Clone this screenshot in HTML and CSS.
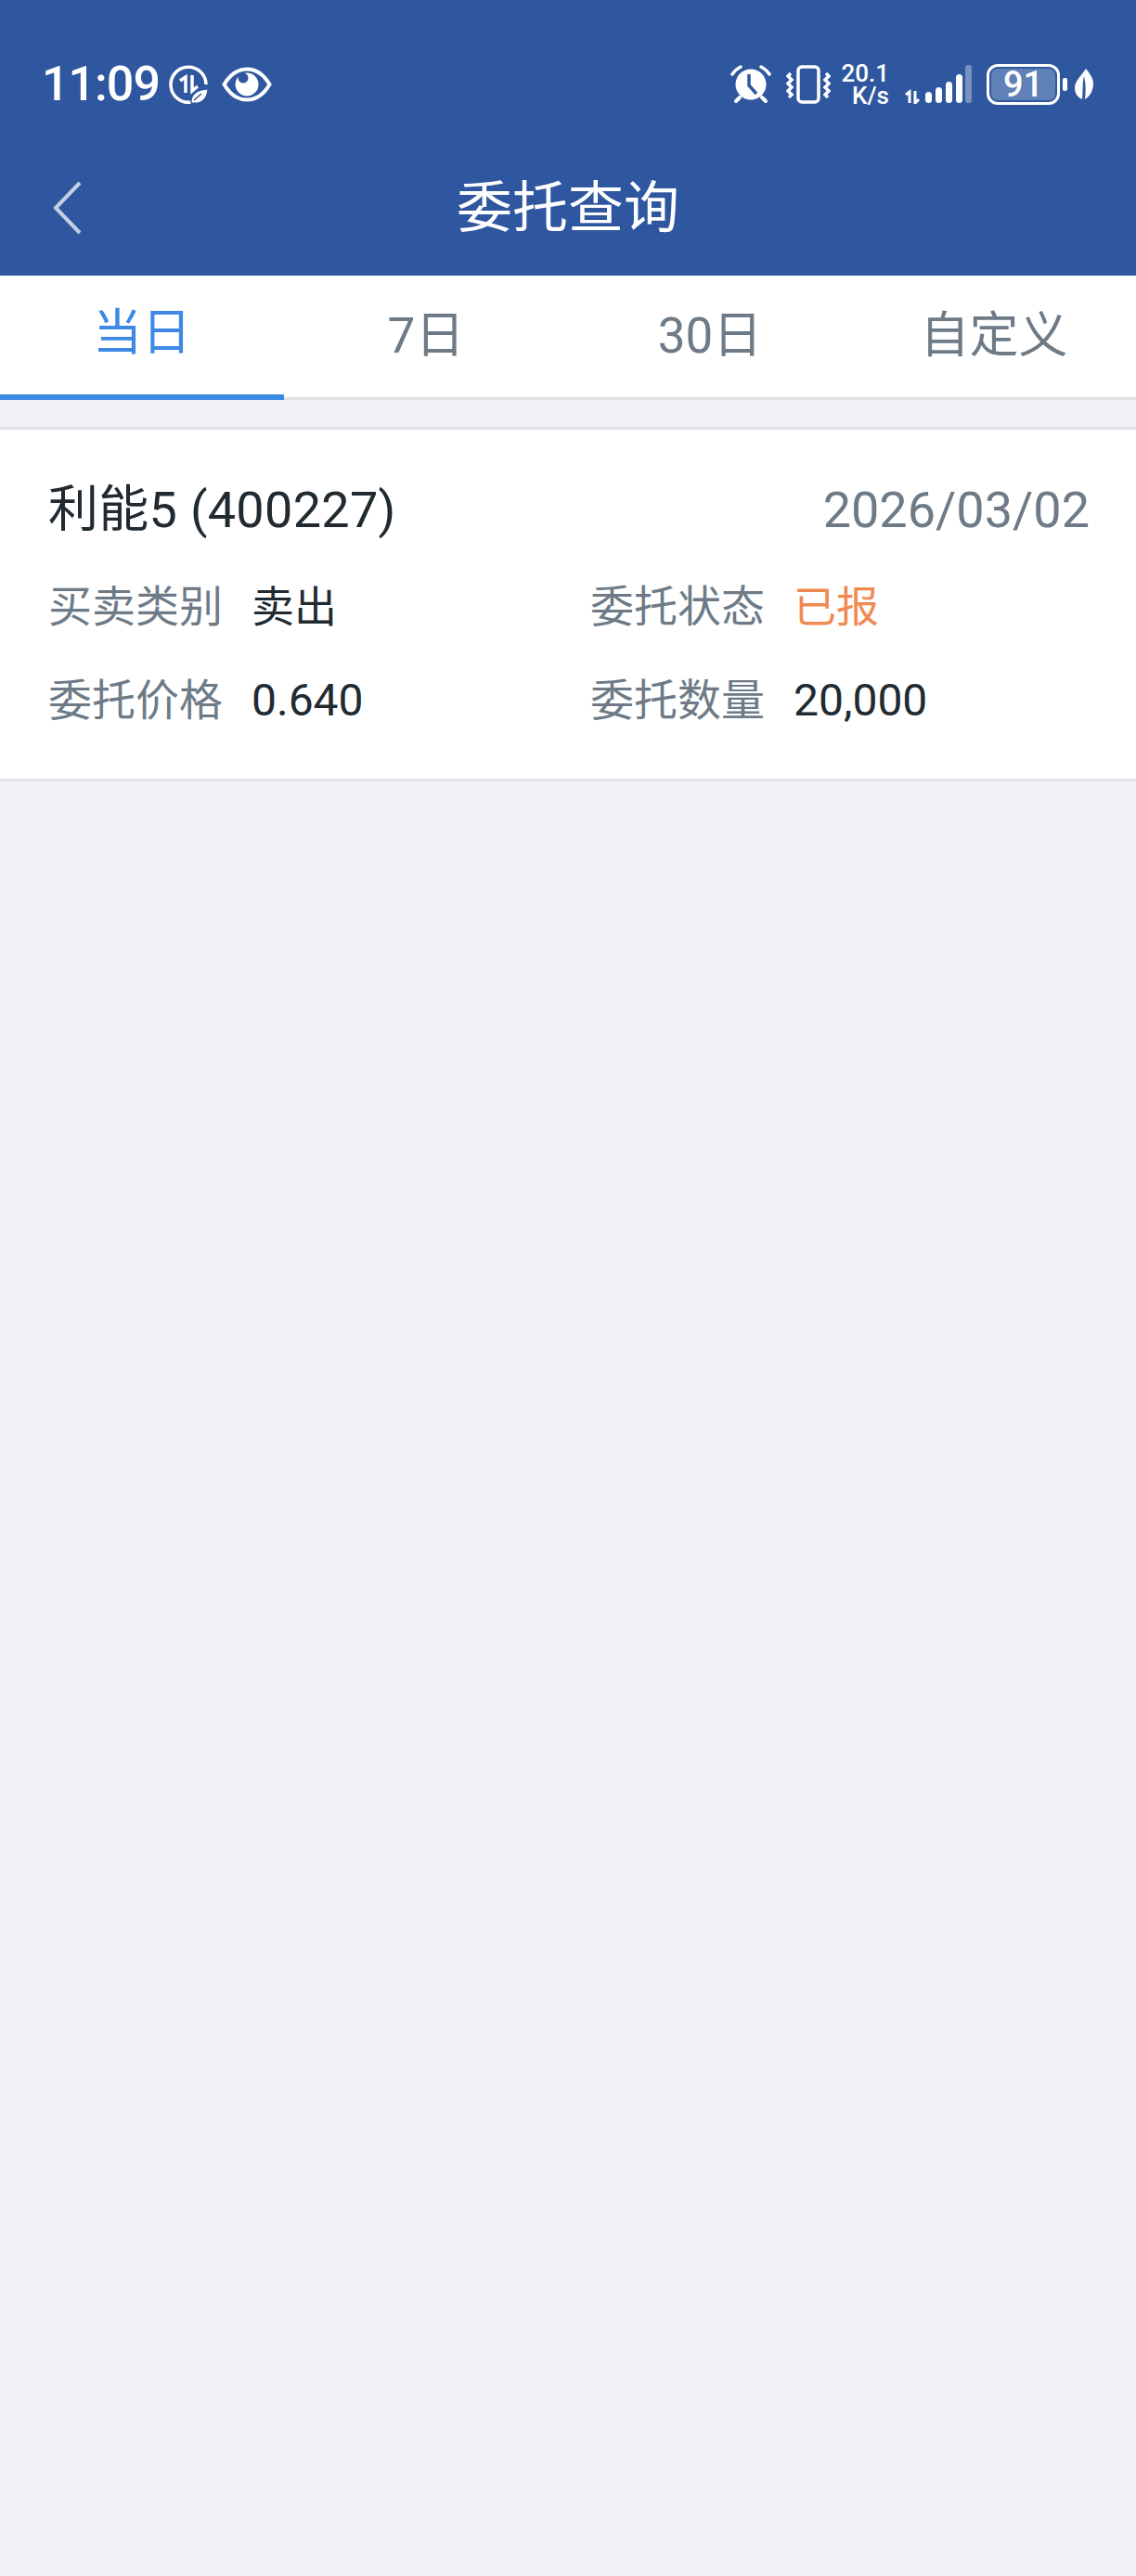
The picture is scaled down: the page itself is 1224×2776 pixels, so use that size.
FILE: index.html
```html
<!DOCTYPE html>
<html lang="zh-CN">
<head>
<meta charset="utf-8">
<title>委托查询</title>
<link rel="stylesheet" href="styles.css">
</head>
<body>
<header class="top">
  <div class="status">
    <div class="status-left">
      <span class="time">11:09</span>
      <svg class="ic-data" viewBox="0 0 42 42" width="42" height="42"><path d="M24 40A19 19 0 1 1 40 21" fill="none" stroke="#fff" stroke-width="3.500"/><path d="M12 17l6-4v17" fill="none" stroke="#fff" stroke-width="3.500"/><path d="M25 11v17l6-5" fill="none" stroke="#fff" stroke-width="3.500"/><path d="M24 41c-1-9 6-15 18-15 0 10-7 17-18 15z" fill="#fff" stroke="#2f579f" stroke-width="1.500"/><path d="M27 38l8-7" stroke="#2f579f" stroke-width="1.500"/></svg>
      <svg class="ic-eye" viewBox="0 0 54 38" width="54" height="38"><path d="M2.500 19C9 8 18 2.500 27 2.500S45 8 51.500 19C45 30 36 35.500 27 35.500S9 30 2.500 19z" fill="none" stroke="#fff" stroke-width="4"/><circle cx="27" cy="19" r="12.500" fill="#fff"/><circle cx="23" cy="12" r="5.500" fill="#2f579f"/></svg>
    </div>
    <div class="status-right">
      <svg class="ic-alarm" viewBox="0 0 44 42" width="44" height="42"><circle cx="22" cy="21" r="16.500" fill="#fff"/><path d="M20 10v12l8 9" fill="none" stroke="#2f579f" stroke-width="3.500"/><path d="M2 10c2-3 5-6 9-8M42 10c-2-3-5-6-9-8" fill="none" stroke="#fff" stroke-width="3.500" stroke-linecap="round"/><path d="M10 35l-4 4M34 35l4 4" stroke="#fff" stroke-width="4" stroke-linecap="round"/></svg>
      <svg class="ic-vib" viewBox="0 0 48 42" width="48" height="42"><rect x="13" y="2" width="22" height="38" rx="4" fill="none" stroke="#fff" stroke-width="3.500"/><path d="M5 9l-3 3 4 4-4 4 4 4-4 4 4 4-3 3M43 9l3 3-4 4 4 4-4 4 4 4-4 4 3 3" fill="none" stroke="#fff" stroke-width="3.500"/></svg>
      <div class="speed"><span>20.1</span><span>K/s</span></div>
      <svg class="ic-signal" viewBox="0 0 72 42" width="72" height="42"><path d="M1 32l4-3v12M11 28v13l4-4" fill="none" stroke="#fff" stroke-width="3"/><rect x="22" y="29" width="7" height="12" rx="3.500" fill="#fff"/><rect x="33" y="24" width="7" height="17" rx="3.500" fill="#fff"/><rect x="44" y="18" width="7" height="23" rx="3.500" fill="#fff"/><rect x="55" y="10" width="7" height="31" rx="3.500" fill="#fff"/><rect x="65" y="0" width="7" height="41" rx="3" fill="#fff" opacity=".35"/></svg>
      <div class="battery"><div class="battery-body"><div class="battery-fill"></div><span class="battery-num">91</span></div><div class="battery-tip"></div></div>
      <svg class="ic-leaf" viewBox="0 0 20 34" width="20" height="34"><path d="M12 0c5 6 8 11 8 16 0 8-4 14-9 17 1-9 1-17-1-25-2 8-1 16-2 25C3 31 0 26 0 21 0 13 7 8 12 0z" fill="#fff"/></svg>
    </div>
  </div>
  <div class="navbar">
    <svg class="back" viewBox="0 0 36 60" width="36" height="60"><path d="M31 3L5 30l26 27" fill="none" stroke="#c3cfe4" stroke-width="4"/></svg>
    <h1 class="title">委托查询</h1>
  </div>
</header>
<nav class="tabs">
  <div class="tab active">当日</div>
  <div class="tab">7日</div>
  <div class="tab">30日</div>
  <div class="tab">自定义</div>
</nav>
<main class="list">
  <section class="card">
    <div class="card-head">
      <span class="name">利能5 (400227)</span>
      <span class="date">2026/03/02</span>
    </div>
    <div class="grid">
      <div class="row"><span class="label">买卖类别</span><span class="val">卖出</span></div>
      <div class="row"><span class="label">委托状态</span><span class="val orange">已报</span></div>
      <div class="row"><span class="label">委托价格</span><span class="val num">0.640</span></div>
      <div class="row"><span class="label">委托数量</span><span class="val num">20,000</span></div>
    </div>
  </section>
</main>
</body>
</html>
```
FILE: styles.css
```css
* { box-sizing: border-box; }
html, body { margin: 0; padding: 0; }
body {
  width: 1224px;
  height: 2776px;
  overflow: hidden;
  background: #f0f2f7;
  font-family: Roboto, "Noto Sans CJK SC", sans-serif;
  font-weight: 400;
}
.top { background: #2f579f; height: 297px; color: #fff; }
.status {
  height: 150px;
  padding: 32px 46px 0 45px;
  display: flex;
  justify-content: space-between;
  align-items: center;
}
.status-left { display: flex; align-items: center; }
.status-left svg, .status-right svg { display: block; flex: none; }
.time { font-size: 52px; line-height: 60px; font-weight: 500; letter-spacing: -1px; width: 129px; }
.ic-data { margin-left: 8px; }
.ic-eye { margin-left: 15px; }
.status-right { display: flex; align-items: center; }
.ic-vib { margin-left: 16px; }
.speed {
  margin-left: 14px;
  width: 49px;
  display: flex;
  flex-direction: column;
  align-items: flex-end;
  font-size: 26px;
  font-weight: 500;
  line-height: 24px;
}
.ic-signal { margin-left: 17px; }
.battery { margin-left: 16px; display: flex; align-items: center; }
.battery-body {
  position: relative;
  width: 79px;
  height: 44px;
  border: 3px solid #fff;
  border-radius: 12px;
  display: flex;
  align-items: center;
  justify-content: center;
}
.battery-fill { position: absolute; left: 2px; top: 2px; bottom: 2px; right: 2px; background: #6080b8; border-radius: 7px; }
.battery-num { position: relative; font-size: 38px; line-height: 38px; font-weight: 500; }
.battery-tip { width: 5px; height: 14px; background: #fff; border-radius: 2px; margin-left: 3px; }
.ic-leaf { margin-left: 8px; }
.navbar { height: 147px; position: relative; display: flex; align-items: flex-start; justify-content: center; }
.back { position: absolute; left: 55px; top: 44px; }
.title { margin: 37px 0 0; font-family: "Noto Sans CJK SC", sans-serif; font-size: 60px; line-height: 64px; font-weight: 400; }
.tabs {
  display: grid;
  grid-template-columns: repeat(4, 1fr);
  height: 134px;
  background: #fff;
  border-bottom: 3px solid #e0e2e8;
}
.tab {
  height: 134px;
  display: flex;
  align-items: center;
  justify-content: center;
  padding-bottom: 4px;
  font-size: 53px;
  line-height: 60px;
  color: #6e7b87;
}
.tab.active { color: #3d89e4; border-bottom: 6px solid #3d89e4; padding-bottom: 4px; }
.list { padding-top: 29px; }
.card { background: #fff; border-top: 3px solid #e0e2e8; border-bottom: 3px solid #e0e2e8; height: 382px; padding: 35px 50px 0 52px; }
.card-head { display: flex; justify-content: space-between; align-items: center; height: 105px; padding-bottom: 2px; }
.name { font-size: 54px; color: #212a30; line-height: 60px; letter-spacing: 0.3px; }
.date { font-size: 54px; color: #6e7b87; line-height: 60px; }
.grid { display: grid; grid-template-columns: 584px 1fr; grid-auto-rows: 101px; }
.row { display: flex; align-items: center; }
.label { width: 219px; font-size: 47px; color: #6e7b87; line-height: 60px; }
.val { font-size: 46px; color: #212a30; line-height: 60px; }
.num { font-size: 48px; }
.orange { color: #f08a50; }
```
